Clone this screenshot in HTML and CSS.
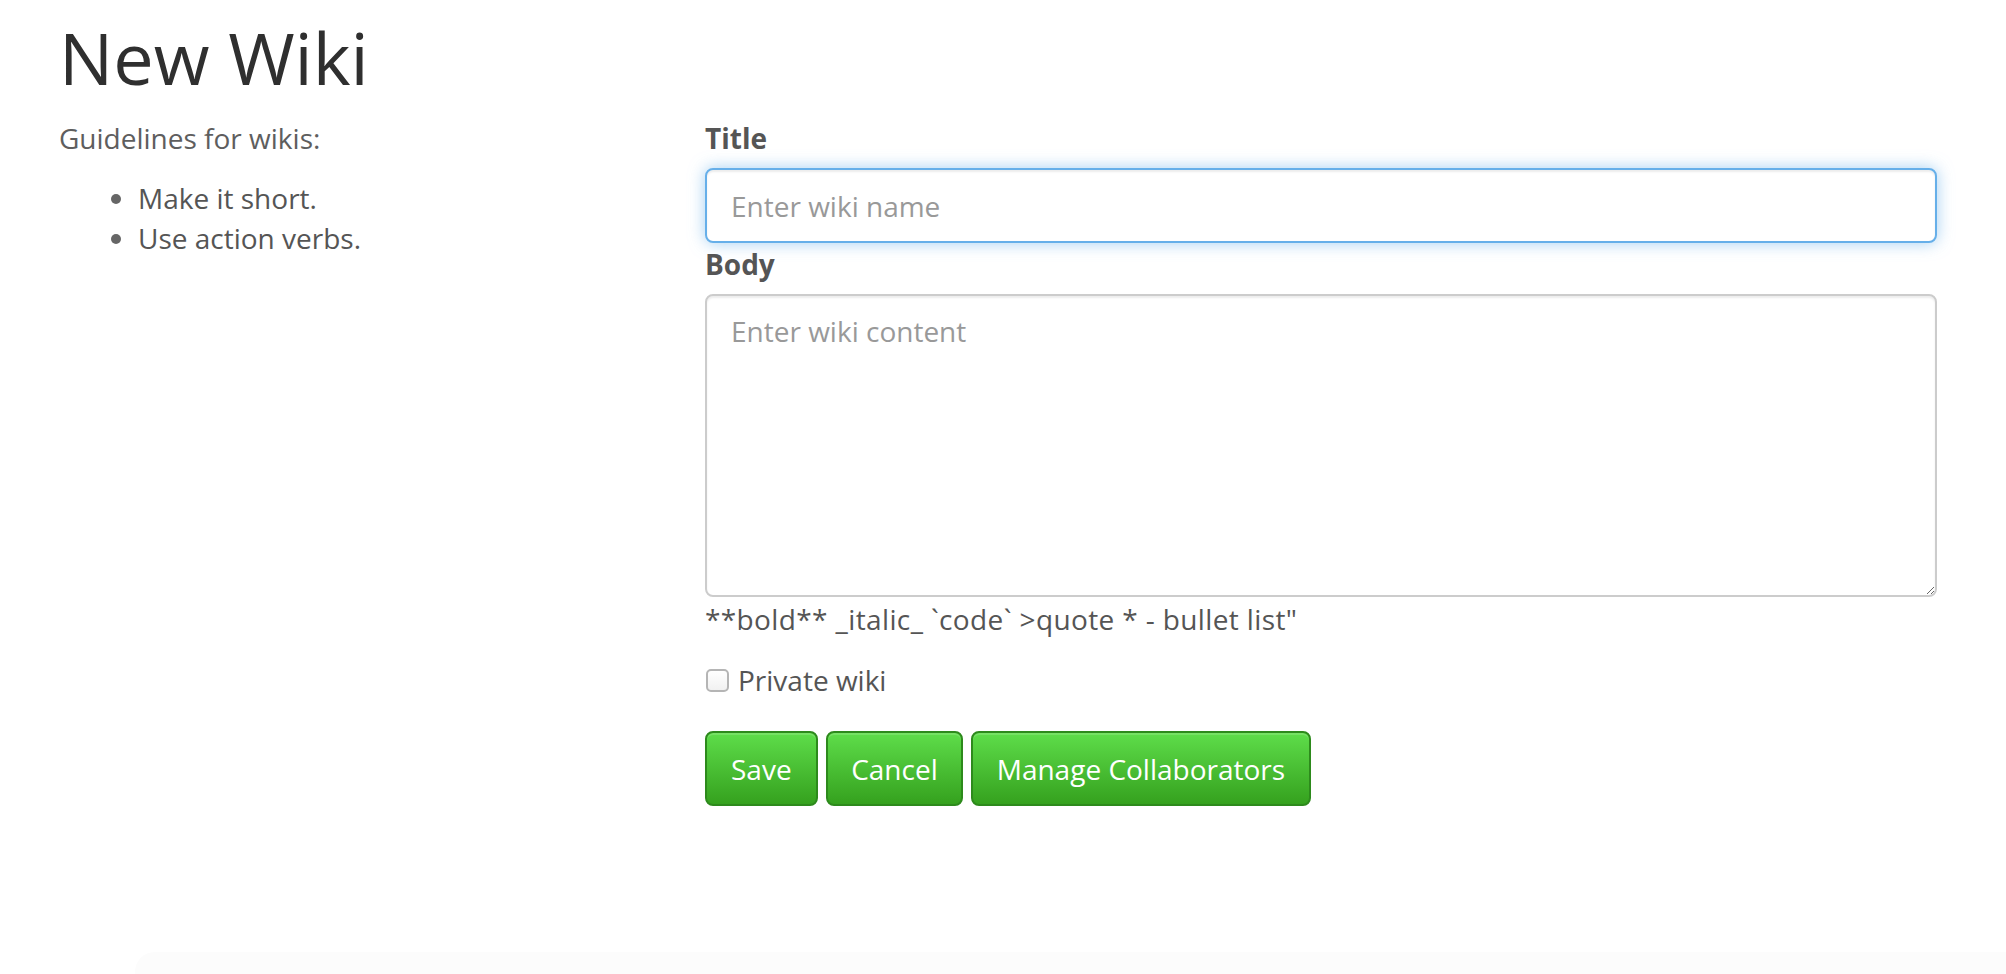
FILE: index.html
```html
<!DOCTYPE html>
<html lang="en">
<head>
<meta charset="utf-8">
<title>New Wiki</title>
<link rel="stylesheet" href="styles.css">
</head>
<body>
<div class="page">
  <h1 class="page-title">New Wiki</h1>
  <div class="row">
    <div class="col-side">
      <p class="guide-intro">Guidelines for wikis:</p>
      <ul class="guide-list">
        <li>Make it short.</li>
        <li>Use action verbs.</li>
      </ul>
    </div>
    <div class="col-main">
      <form class="wiki-form">
        <label class="field-label" for="title">Title</label>
        <input class="field-input is-focused" id="title" type="text" placeholder="Enter wiki name">
        <label class="field-label" for="body">Body</label>
        <textarea class="field-area" id="body" placeholder="Enter wiki content"></textarea>
        <p class="help-text">**bold** _italic_ `code` &gt;quote * - bullet list"</p>
        <label class="check-row"><input class="check-box" type="checkbox"> Private wiki</label>
        <div class="actions">
          <button type="button" class="btn-green">Save</button>
          <button type="button" class="btn-green">Cancel</button>
          <button type="button" class="btn-green">Manage Collaborators</button>
        </div>
      </form>
    </div>
  </div>
</div>
<div class="footer-band"></div>
</body>
</html>
```

FILE: styles.css
```css
* { box-sizing: border-box; }
html, body {
  margin: 0;
  padding: 0;
  background: #fff;
  height: 100%;
  overflow: hidden;
}
body {
  font-family: "Open Sans", "Noto Sans", "Liberation Sans", sans-serif;
  font-size: 28px;
  line-height: 40px;
  color: #555;
  position: relative;
}
.page {
  padding-left: 59px;
}
.page-title {
  margin: 18px 0 20px;
  font-size: 72px;
  line-height: 79px;
  font-weight: 400;
  color: #2f2f2f;
}
.row {
  display: flex;
}
.col-side {
  width: 646px;
  flex: none;
}
.col-main {
  width: 1232px;
  flex: none;
}
.guide-intro {
  margin: 1px 0 20px;
  color: #5e5e5e;
}
.guide-list {
  margin: 0;
  padding-left: 79px;
  color: #555;
}
.guide-list li::marker {
  color: #666;
}
.wiki-form {
  margin: 0;
}
.field-label {
  display: block;
  font-weight: 700;
  margin-top: 1px;
  margin-bottom: 10px;
  color: #555;
}
.field-input,
.field-area {
  display: block;
  width: 100%;
  font-family: inherit;
  font-size: 28px;
  line-height: 40px;
  color: #555;
  background: #fff;
  border: 2px solid #ccc;
  border-radius: 8px;
  padding: 12px 24px;
  box-shadow: inset 0 2px 2px rgba(0, 0, 0, 0.075);
  outline: none;
}
.field-input {
  height: 75px;
  padding-top: 15px;
  padding-bottom: 15px;
}
.field-input.is-focused {
  border-color: #66afe9;
  box-shadow: inset 0 2px 2px rgba(0, 0, 0, 0.075), 0 0 16px rgba(102, 175, 233, 0.6);
}
.field-area {
  height: 303px;
  padding-top: 15px;
  resize: vertical;
}
.field-input::placeholder,
.field-area::placeholder {
  color: #999;
  opacity: 1;
}
.help-text {
  margin: 2px 0 21px;
  color: #555;
  letter-spacing: 0.38px;
}
.check-row {
  display: flex;
  align-items: center;
  gap: 9px;
  margin-bottom: 31px;
  color: #555;
}
.check-box {
  appearance: none;
  -webkit-appearance: none;
  width: 23px;
  height: 23px;
  margin: 0 0 0 1px;
  border: 2px solid #b5b5b5;
  border-radius: 5px;
  background: linear-gradient(#fff, #f1f1f1);
}
.actions {
  display: flex;
  gap: 8px;
}
.btn-green {
  height: 75px;
  padding: 0 24px;
  font-family: inherit;
  font-size: 28px;
  line-height: 40px;
  color: #fff;
  border: 2px solid #2d8a1c;
  border-radius: 8px;
  background: linear-gradient(#5edd4a, #35a11e);
  box-shadow: inset 0 2px 0 rgba(255, 255, 255, 0.15);
}
.btn-green + .btn-green {
  padding: 0 23.5px;
}
.footer-band {
  position: absolute;
  left: 135px;
  right: 0;
  bottom: 0;
  height: 22px;
  background: #fcfcfc;
  border-top-left-radius: 20px;
}
```
